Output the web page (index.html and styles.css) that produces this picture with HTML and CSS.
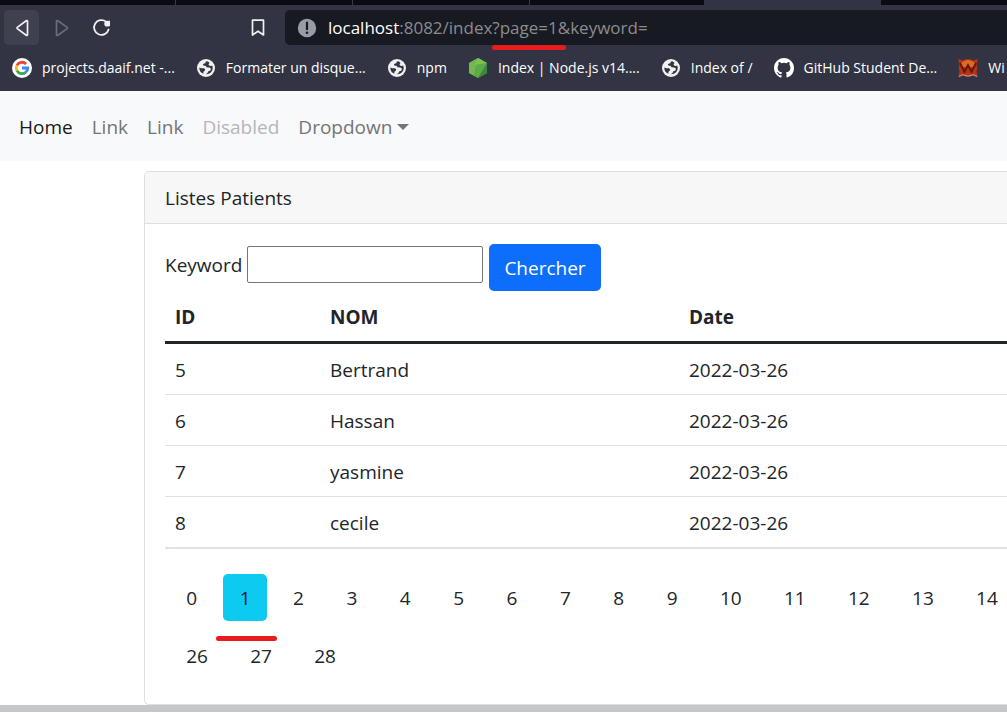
FILE: index.html
```html
<!DOCTYPE html>
<html lang="fr">
<head>
<meta charset="utf-8">
<meta name="viewport" content="width=device-width, initial-scale=1">
<title>Listes Patients</title>
<link rel="stylesheet" href="styles.css">
</head>
<body>
<svg class="sprite" aria-hidden="true">
  <symbol id="globe" viewBox="0 0 20 20">
    <circle cx="10" cy="10" r="9" fill="#f1f1f1"/>
    <path d="M11 3.2c-1.400.3-1.800 1.200-1.500 2.100-.9.400-1.700 0-2.300.800-.6.900.2 1.800 1.300 1.700 1 0 1.700.4 1.900 1.500l2.600.3c1.200.1 1.900.8 1.800 1.900-.1 1.200-1.200 1.500-2.300 1.600-.5 1.300-1 2.500-2.700 3.100 3.600.3 6.900-2.600 6.900-6.200 0-.9-.2-1.800-.5-2.500-1 .7-2.800.6-3.400-.4-.5-.9 0-1.700.8-2.200-.8-.9-1.600-1.500-2.600-1.700z" fill="#323443"/>
    <path d="M3.300 9.400c-.2 3 1.500 5.400 4 6.300.2-1.200-.2-1.900.7-2.500 1-.6 1.400-1.200.9-2.100-.6-1-1.700-.7-2.900-.8-1 0-1.700-.9-2.700-.9z" fill="#323443"/>
  </symbol>
</svg>

<header class="browser">
  <div class="tabs"><span class="tab tab-first"></span><span class="tab"></span><span class="tab"></span><span class="tab tab-last"></span><span class="tab tab-active"></span></div>
  <div class="toolbar">
    <button class="tool tool-on" type="button" aria-label="Back">
      <svg width="20" height="20" viewBox="0 0 20 20" fill="none" stroke="#f1f1f3" stroke-width="1.700" stroke-linejoin="round"><path d="M15.500 3.200v13.600a.8.8 0 0 1-1.300.5L5.300 10.600a.8.8 0 0 1 0-1.200l8.900-6.700a.8.8 0 0 1 1.300.5z"/></svg>
    </button>
    <button class="tool" type="button" aria-label="Forward" disabled>
      <svg width="20" height="20" viewBox="0 0 20 20" fill="none" stroke="#6b6d79" stroke-width="1.700" stroke-linejoin="round"><path d="M4.500 3.200v13.600a.8.8 0 0 0 1.300.5l9.400-6.700a.8.8 0 0 0 0-1.200L5.800 2.700a.8.8 0 0 0-1.300.5z"/></svg>
    </button>
    <button class="tool" type="button" aria-label="Reload">
      <svg width="20" height="20" viewBox="0 0 20 20" fill="none" stroke="#f1f1f3" stroke-width="1.800" stroke-linecap="round"><path d="M14 3.600A7.400 7.400 0 1 0 16.600 11.500"/><circle cx="15.200" cy="5.700" r="2.900" fill="#f1f1f3" stroke="none"/><path d="M17.200 3.200v4.400" stroke-width="1.500"/></svg>
    </button>
    <button class="tool tool-save" type="button" aria-label="Bookmark">
      <svg width="20" height="20" viewBox="0 0 20 20" fill="none" stroke="#f1f1f3" stroke-width="1.700" stroke-linejoin="round"><path d="M4.500 2.200h11v14.800L10 13.200l-5.500 3.800z"/></svg>
    </button>
    <div class="address">
      <svg width="20" height="20" viewBox="0 0 20 20"><circle cx="10" cy="10" r="9.200" fill="#999ba5"/><path d="M10 4.700v6.500" stroke="#181a21" stroke-width="2.200" stroke-linecap="round"/><circle cx="10" cy="14.700" r="1.300" fill="#181a21"/></svg>
      <span class="url"><span class="host">localhost</span>:8082/index?<span class="marked">page=1</span>&amp;keyword=</span>
    </div>
  </div>
  <nav class="bookmarks" aria-label="Bookmarks">
    <a href="#"><svg width="20" height="20" viewBox="0 0 20 20"><circle cx="10" cy="10" r="10" fill="#fff"/><g fill="none" stroke-width="2.800"><path d="M4.900 7.400A5.700 5.700 0 0 1 14 5.900" stroke="#ea4335"/><path d="M4.900 12.600a5.700 5.700 0 0 1 0-5.200" stroke="#fbbc05"/><path d="M13.800 14.200a5.700 5.700 0 0 1-8.900-1.600" stroke="#34a853"/><path d="M10 10h5.700a5.700 5.700 0 0 1-1.900 4.200" stroke="#4285f4"/></g></svg>projects.daaif.net -...</a>
    <a href="#"><svg width="20" height="20"><use href="#globe"/></svg>Formater un disque...</a>
    <a href="#"><svg width="20" height="20"><use href="#globe"/></svg>npm</a>
    <a href="#"><svg width="20" height="20" viewBox="0 0 20 20"><path d="M10 0l9 5v10l-9 5-9-5V5z" fill="#539e43"/><path d="M10 0L1 5v10l5 2.800z" fill="#72b84f"/><path d="M10 0l9 5-9 15-4-2.200z" fill="#5caa48"/><path d="M10 0l9 5-12.500 2z" fill="#7cc058"/><path d="M19 5v10l-9 5z" fill="#3f873f"/></svg>Index | Node.js v14....</a>
    <a href="#"><svg width="20" height="20"><use href="#globe"/></svg>Index of /</a>
    <a href="#"><svg width="20" height="20" viewBox="0 0 16 16"><path fill="#fff" d="M8 0C3.580 0 0 3.580 0 8c0 3.540 2.290 6.530 5.470 7.590.4.070.55-.17.55-.38 0-.19-.01-.82-.01-1.490-2.010.37-2.530-.49-2.690-.94-.09-.23-.48-.94-.82-1.130-.28-.15-.68-.52-.01-.53.63-.01 1.080.58 1.230.82.72 1.210 1.870.87 2.330.66.07-.52.28-.87.51-1.070-1.780-.2-3.640-.89-3.640-3.950 0-.87.31-1.590.82-2.150-.08-.2-.36-1.020.08-2.120 0 0 .67-.21 2.200.82a7.600 7.600 0 0 1 4 0c1.530-1.040 2.200-.82 2.200-.82.44 1.100.16 1.920.08 2.120.51.56.82 1.270.82 2.150 0 3.070-1.870 3.750-3.650 3.950.29.25.54.73.54 1.480 0 1.070-.01 1.930-.01 2.200 0 .21.15.46.55.38A8 8 0 0 0 16 8c0-4.420-3.580-8-8-8z"/></svg>GitHub Student De...</a>
    <a href="#"><svg width="20" height="20" viewBox="0 0 20 20"><path d="M0 1l5 1.500Q10-.5 15 2.500L20 1l-1.500 6q1.500 3 0 6l1.500 6-5-1.500q-5 3-10 0L0 19l1.500-6q-1.500-3 0-6z" fill="#b83412"/><path d="M3 5q7-6 14 0l-1 4H4z" fill="#df6a26"/><path d="M2 5l4.500 9L10 7l3.500 7L18 5" fill="none" stroke="#651508" stroke-width="1.800"/><path d="M1 18.500l4-1.800q5 3 10 0l4 1.800" fill="none" stroke="#aaa3a5"/></svg>Wi</a>
  </nav>
</header>

<nav class="navbar" aria-label="Navigation">
  <a class="active" href="#">Home</a>
  <a href="#">Link</a>
  <a href="#">Link</a>
  <a class="disabled" href="#" aria-disabled="true">Disabled</a>
  <button class="dropdown" type="button">Dropdown</button>
</nav>

<main class="content">
  <section class="card">
    <h1 class="card-header">Listes Patients</h1>
    <div class="card-body">
      <form class="search">
        <div class="field">
          <label for="keyword">Keyword</label>
          <input id="keyword" name="keyword" type="text">
        </div>
        <button class="submit" type="submit">Chercher</button>
      </form>
      <table class="patients">
        <thead><tr><th class="col-id" scope="col">ID</th><th class="col-name" scope="col">NOM</th><th scope="col">Date</th></tr></thead>
        <tbody>
          <tr><td>5</td><td>Bertrand</td><td>2022-03-26</td></tr>
          <tr><td>6</td><td>Hassan</td><td>2022-03-26</td></tr>
          <tr><td>7</td><td>yasmine</td><td>2022-03-26</td></tr>
          <tr><td>8</td><td>cecile</td><td>2022-03-26</td></tr>
        </tbody>
      </table>
      <nav class="pages" aria-label="Pages">
        <div class="pages-first">
          <a href="#">0</a><a class="current" href="#" aria-current="page">1</a><a href="#">2</a><a href="#">3</a><a href="#">4</a><a href="#">5</a><a href="#">6</a><a href="#">7</a><a href="#">8</a><a href="#">9</a><a href="#">10</a><a href="#">11</a><a href="#">12</a><a href="#">13</a><a href="#">14</a>
        </div>
        <div class="pages-last"><a href="#">26</a><a href="#">27</a><a href="#">28</a></div>
      </nav>
    </div>
  </section>
</main>
<footer class="bottom-edge"></footer>
</body>
</html>
```
FILE: styles.css
```css
* { box-sizing: border-box; }

body {
  margin: 0;
  min-height: 100vh;
  display: flex;
  flex-direction: column;
  overflow: hidden;
  background: #fff;
  color: #212529;
  font: 19px/30px "Open Sans", "Noto Sans", sans-serif;
}

a { color: inherit; text-decoration: none; }
button { font: inherit; border: 0; }
svg { flex: none; display: block; }
.sprite { position: absolute; width: 0; height: 0; }

/* Browser bars */
.browser { background: #323443; color: #fff; }
.tabs { display: flex; height: 5px; background: #0b0b14; }
.tab { width: 177px; border-right: 1px solid #3a3a40; }
.tab-first { width: 176px; }
.tab-last { border: 0; width: 174px; }
.tab-active { border: 0; background: #323443; }
.toolbar { display: flex; align-items: center; gap: 5px; height: 45px; padding-left: 4px; }
.tool {
  display: grid;
  place-items: center;
  width: 35px;
  height: 35px;
  padding: 0;
  border-radius: 5px;
  background: none;
}
.tool-on { background: #3f414f; }
.tool-save { margin-left: auto; }
.address {
  flex: 0 0 calc(100% - 281px);
  display: flex;
  align-items: center;
  gap: 11px;
  height: 35px;
  margin-left: 5px;
  padding-left: 12px;
  border-radius: 5px 0 0 5px;
  background: #181a21;
}
.url { color: #8b8c90; font-size: 17px; white-space: nowrap; }
.host { color: #fff; }
.marked { position: relative; }
.marked::after,
.current::after {
  content: "";
  position: absolute;
  height: 5px;
  border-radius: 3px;
  background: #e81c1f;
}
.marked::after { left: -8px; right: -8px; bottom: -11px; }

.bookmarks {
  display: flex;
  gap: 21px;
  height: 41px;
  padding: 3px 0 8px 12px;
  font-size: 14px;
  white-space: nowrap;
}
.bookmarks a { display: flex; align-items: center; gap: 10px; }

/* Site navigation */
.navbar {
  display: flex;
  align-items: center;
  gap: 19px;
  height: 70px;
  padding: 2px 19px 0;
  background: #f8f9fa;
  color: #747576;
}
.navbar .active { color: #191919; }
.navbar .disabled { color: #b5b6b7; }
.dropdown { display: flex; align-items: center; gap: 5px; padding: 0; background: none; color: inherit; }
.dropdown::after { content: ""; border: 6px solid transparent; border-top-color: currentColor; border-bottom: 0; }

/* Patient card */
.content { padding: 10px 0 0 144px; }
.card { border: 1px solid #dfdfdf; border-right: 0; border-radius: 5px 0 0 5px; }
.card-header {
  margin: 0;
  padding: 11px 20px 10px;
  border-bottom: 1px solid #dfdfdf;
  border-radius: 4px 0 0;
  background: #f7f7f7;
  font: inherit;
}
.card-body { padding: 20px 0 20px 20px; }
.search { display: flex; gap: 6px; height: 47px; }
.field { display: flex; align-items: center; gap: 5px; height: 41px; }
.field input {
  width: 236px;
  height: 37px;
  border: 1px solid #767676;
  border-radius: 2px;
  background: #fff;
  font: inherit;
}
.submit { padding: 0 15px; border-radius: 5px; background: #0d6efd; color: #fff; }

.patients { width: 100%; margin-bottom: 20px; border-spacing: 0; table-layout: fixed; text-align: left; }
.patients th, .patients td { padding: 11px 10px 9px; }
.patients th { border-bottom: 3px solid #212529; }
.patients td { border-bottom: 1px solid #dee2e6; }
.patients tr:last-child td { border-bottom-width: 2px; }
.patients .col-id { width: 155px; }
.patients .col-name { width: 359px; }

.pages { display: grid; gap: 1px; }
.pages-first { display: grid; grid-template-columns: repeat(10, 5fr) repeat(5, 6fr); margin-right: -12px; }
.pages-last { display: flex; }
.pages a { margin: 5px; padding: 9px 0 8px; border-radius: 5px; text-align: center; }
.pages-last a { width: 54px; }
.pages .current { position: relative; background: #0dcaf0; color: #101437; }
.current::after { left: -7px; right: -10px; bottom: -20px; }

.bottom-edge { flex: 1; background: #c5c7c9; }
```
